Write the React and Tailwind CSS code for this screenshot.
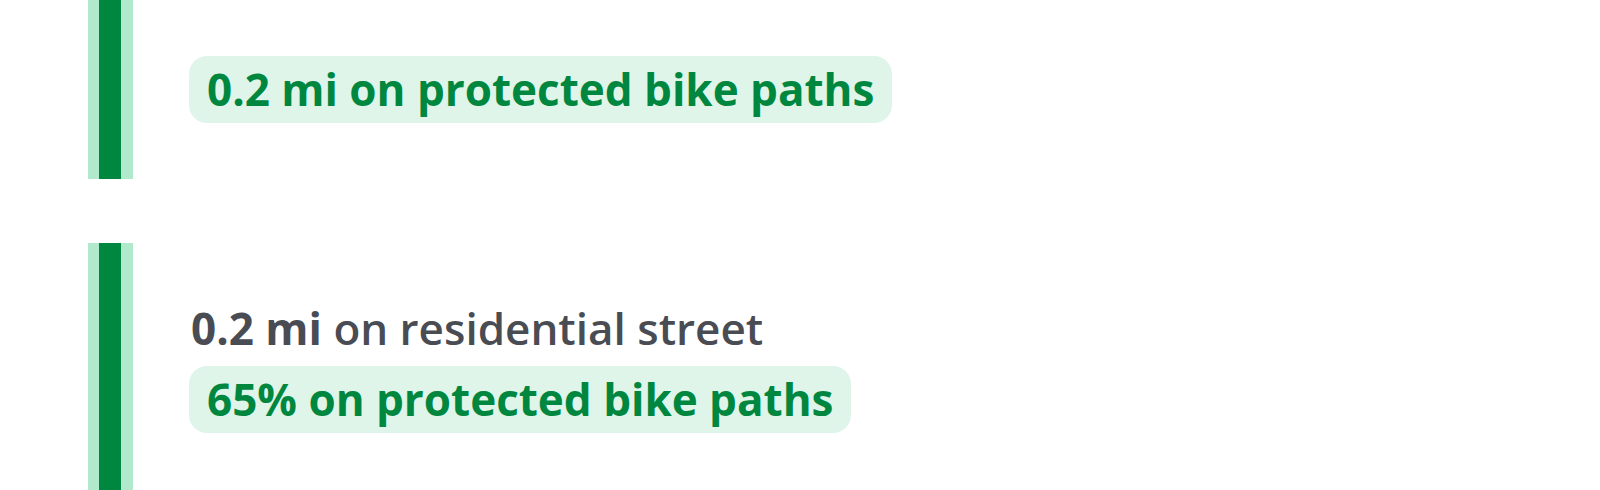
export default function App() {
  return (
    <div className="h-[490px] w-[1600px] overflow-hidden bg-white pl-[88px] font-['Open_Sans',sans-serif]">
      <div className="flex flex-col gap-16">
        {/* segment 1 */}
        <div className="flex h-[179px]">
          <div className="w-[45px] bg-[#b1e9cd] pl-[11px]">
            <div className="h-full w-[22px] bg-[#00873f]"></div>
          </div>
          <div className="ml-14 flex flex-col justify-center">
            <div className="w-fit rounded-[18px] bg-[#dff5ea] px-[18px] py-2 text-[44px] font-bold leading-[51px] text-[#00873f]">
              0.2 mi on protected bike paths
            </div>
          </div>
        </div>

        {/* segment 2 */}
        <div className="flex h-[247px]">
          <div className="w-[45px] bg-[#b1e9cd] pl-[11px]">
            <div className="h-full w-[22px] bg-[#00873f]"></div>
          </div>
          <div className="ml-14 flex flex-col justify-center gap-[14px] pt-[4px]">
            <div className="pl-[2px] text-[44px] leading-[48px] text-[#4a4c54]">
              <span className="font-bold">0.2 mi</span>{' '}
              <span className="font-semibold">on residential street</span>
            </div>
            <div className="w-fit rounded-[18px] bg-[#dff5ea] px-[18px] py-2 text-[44px] font-bold leading-[51px] text-[#00873f]">
              65% on protected bike paths
            </div>
          </div>
        </div>
      </div>
    </div>
  );
}
